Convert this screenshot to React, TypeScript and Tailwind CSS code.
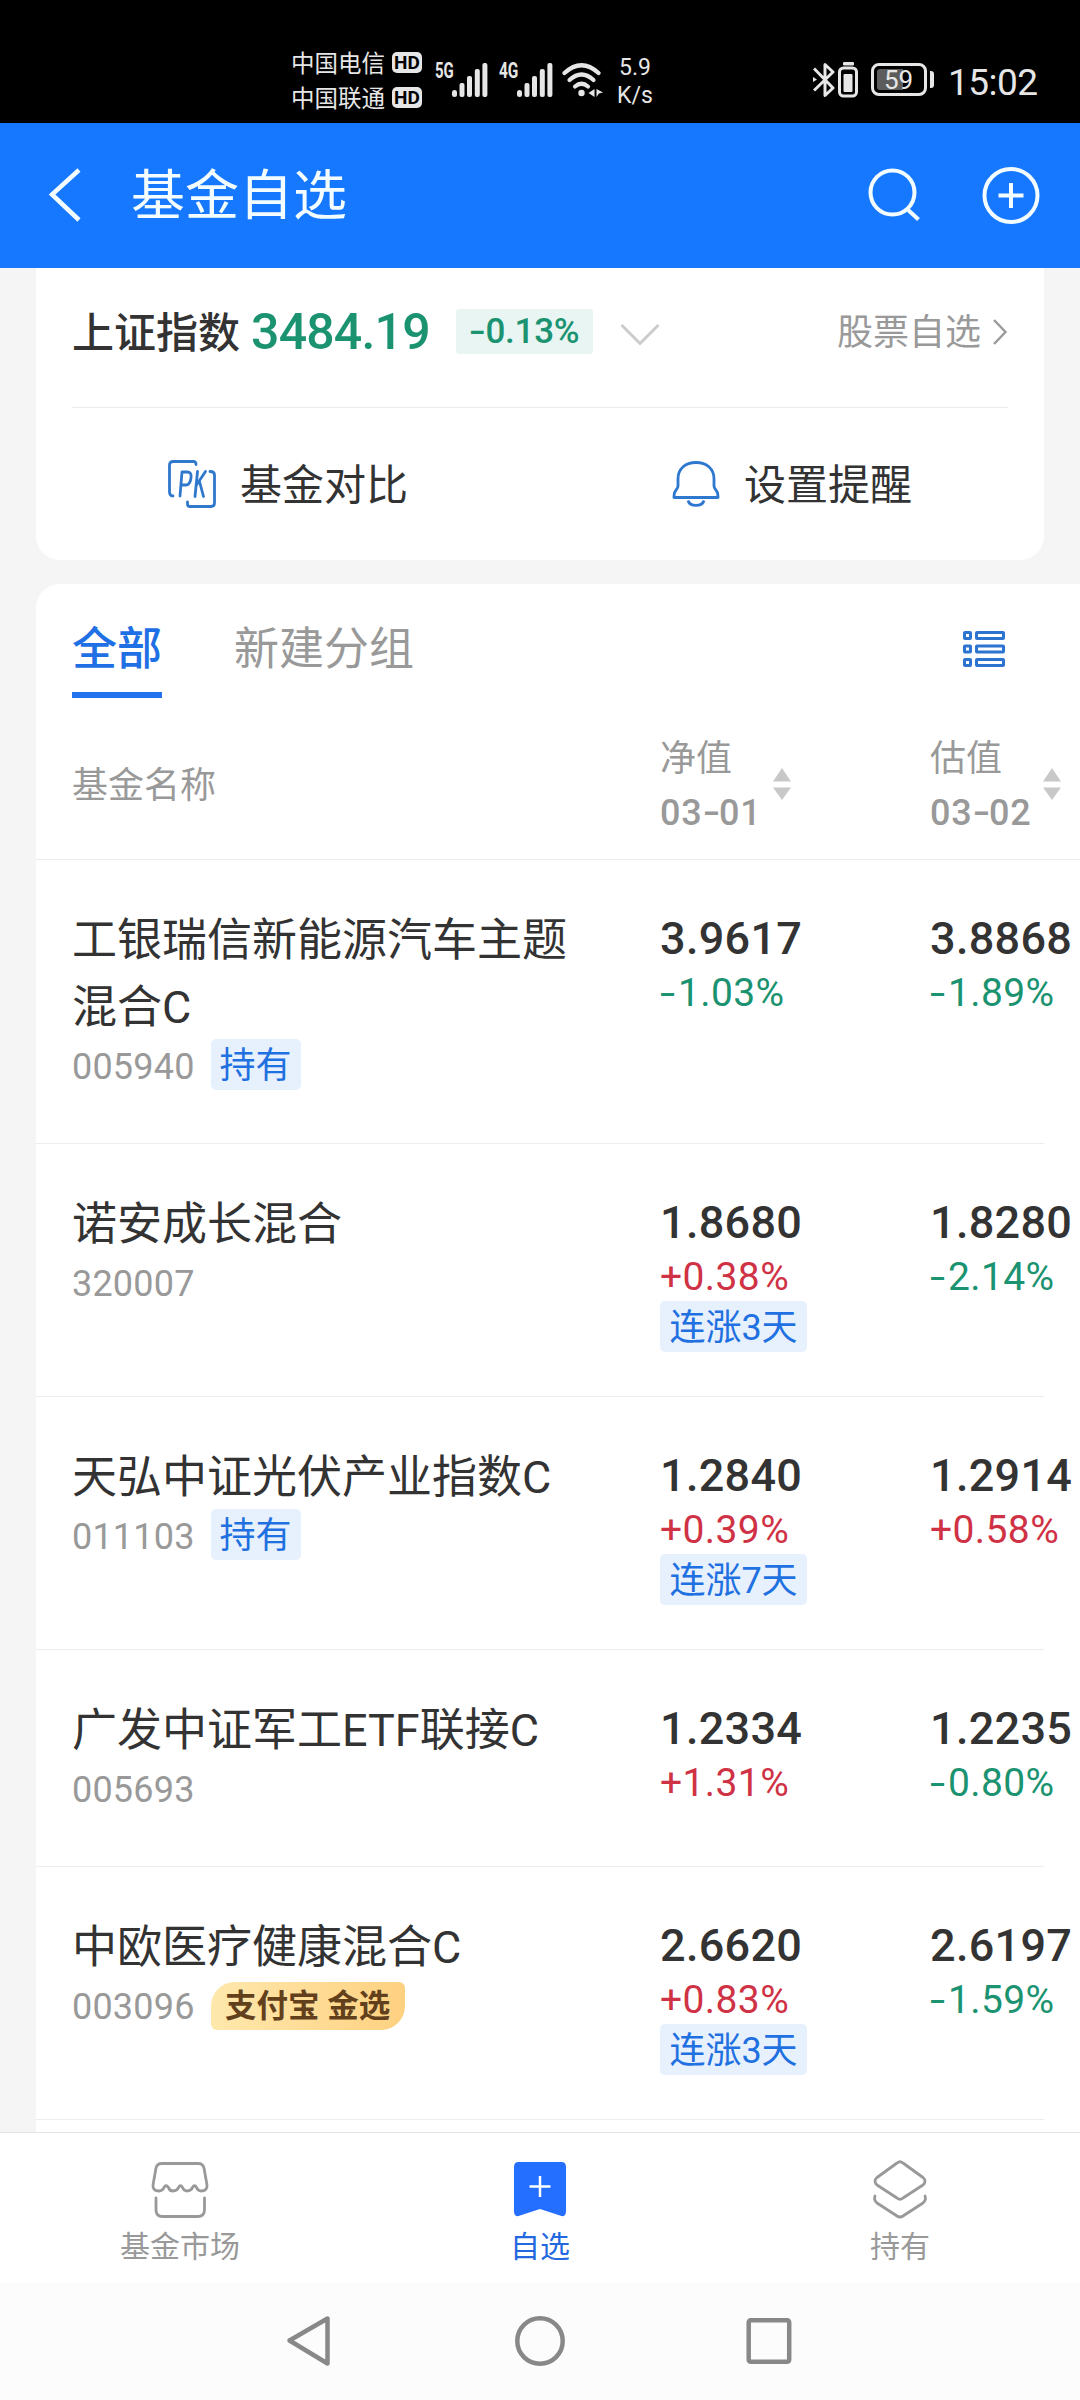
import { Fragment } from 'react';
import type { ReactNode } from 'react';
import clsx from 'clsx';

type Quote = { value: string; change: string; streak?: string };

type Fund = {
    name: string;
    code: string;
    held?: boolean;
    picked?: boolean;
    nav: Quote;
    estimate: Quote;
    height: string;
};

const funds: Fund[] = [
    {
        name: '工银瑞信新能源汽车主题混合C',
        code: '005940',
        held: true,
        nav: { value: '3.9617', change: '-1.03%' },
        estimate: { value: '3.8868', change: '-1.89%' },
        height: 'h-[284px]',
    },
    {
        name: '诺安成长混合',
        code: '320007',
        nav: { value: '1.8680', change: '+0.38%', streak: '连涨3天' },
        estimate: { value: '1.8280', change: '-2.14%' },
        height: 'h-[253px]',
    },
    {
        name: '天弘中证光伏产业指数C',
        code: '011103',
        held: true,
        nav: { value: '1.2840', change: '+0.39%', streak: '连涨7天' },
        estimate: { value: '1.2914', change: '+0.58%' },
        height: 'h-[253px]',
    },
    {
        name: '广发中证军工ETF联接C',
        code: '005693',
        nav: { value: '1.2334', change: '+1.31%' },
        estimate: { value: '1.2235', change: '-0.80%' },
        height: 'h-[217px]',
    },
    {
        name: '中欧医疗健康混合C',
        code: '003096',
        picked: true,
        nav: { value: '2.6620', change: '+0.83%', streak: '连涨3天' },
        estimate: { value: '2.6197', change: '-1.59%' },
        height: 'h-[253px]',
    },
];

// Roboto's hyphen is short, so stretch it to the width of a minus sign
function Num({ children }: { children: string }) {
    return (
        <>
            {children.split('-').map((part, i) => (
                <Fragment key={i}>
                    {i > 0 && <span className="inline-block w-[0.46em] origin-left scale-x-[1.4] tracking-normal">-</span>}
                    {part}
                </Fragment>
            ))}
        </>
    );
}

function SignalBars() {
    return (
        <svg width="36" height="34" viewBox="0 0 36 34" fill="#e6e6e6">
            <rect x="0" y="27" width="5" height="7" rx="2.5" />
            <rect x="7.5" y="20" width="5" height="14" rx="2" />
            <rect x="15" y="13" width="5" height="21" rx="2" />
            <rect x="22.8" y="6" width="5" height="28" rx="2" />
            <rect x="30.4" y="0" width="5" height="34" rx="2" />
        </svg>
    );
}

function Carrier({ name }: { name: string }) {
    return (
        <div className="flex h-[35px] items-center">
            <span className="w-[101px] pt-[3px] text-[23.5px] leading-[35px] whitespace-nowrap">{name}</span>
            <span className="flex h-[21px] w-[30px] items-center justify-center rounded-[5px] bg-[#e6e6e6] text-[19px] leading-none font-bold text-black">
                HD
            </span>
        </div>
    );
}

function StatusBar() {
    return (
        <div className="flex h-[123px] items-start bg-black pl-[291px] text-[#e6e6e6]">
            <div className="mt-[45px] w-[144px]">
                <Carrier name="中国电信" />
                <Carrier name="中国联通" />
            </div>
            <span className="mt-[62px] w-[17px] origin-left scale-x-[0.68] text-[22px] leading-[17px] font-bold">5G</span>
            <div className="mt-[63px] w-[47px]">
                <SignalBars />
            </div>
            <span className="mt-[62px] w-[18px] origin-left scale-x-[0.7] text-[22px] leading-[17px] font-bold">4G</span>
            <div className="mt-[63px] w-[45px]">
                <SignalBars />
            </div>
            <svg className="mt-[62px]" width="42" height="36" viewBox="0 0 42 36" fill="none" stroke="#e6e6e6" strokeWidth="4.2" strokeLinecap="round">
                <path d="M2.5 11 Q19.5 -4.5 36.5 11" />
                <path d="M7.5 18 Q19.5 7 31.5 18" />
                <path d="M13 24.5 Q19.5 19 26 24.5" />
                <circle cx="19.5" cy="31" r="3.2" fill="#e6e6e6" stroke="none" />
                <path d="M32.500 27V35L26.500 31ZM34.500 27L41 30.500 37 31.500 34.500 35Z" fill="#e6e6e6" stroke="none" />
            </svg>
            <div className="mt-[54px] ml-[11px] w-[40px] text-center text-[23px] leading-[28px]">
                <div>5.9</div>
                <div>K/s</div>
            </div>
            <svg className="mt-[61px] ml-[158px]" width="24" height="38" viewBox="0 0 24 38" fill="none" stroke="#e6e6e6" strokeWidth="3" strokeLinejoin="round">
                <path d="M1 7.5 L20 27 12 34.5 V3.5 L20 11 1 29.5" />
                <path d="M0 16 L4 18.5 0 21Z" fill="#e6e6e6" stroke="none" />
            </svg>
            <svg className="mt-[61px] ml-px" width="21" height="38" viewBox="0 0 21 38" fill="none">
                <rect x="5" y="1" width="11" height="3.5" rx="1" fill="#e6e6e6" />
                <rect x="1.5" y="7" width="17" height="28" rx="4" stroke="#e6e6e6" strokeWidth="3" />
                <rect x="5.5" y="13" width="9" height="18" rx="1" fill="#e6e6e6" />
            </svg>
            <div className="mt-[63px] ml-[12px] flex items-center gap-[3px]">
                <div className="flex h-[33px] w-[56px] items-center rounded-[8px] border-[3px] border-[#e6e6e6] pl-[3px]">
                    <div className="flex h-[21px] w-[26px] items-center rounded-l-[3px] bg-[#5c5c5c] pl-[7px] text-[26px] leading-none">59</div>
                </div>
                <div className="h-[17px] w-[4px] rounded-r-[3px] bg-[#e6e6e6]" />
            </div>
            <span className="mt-[62px] ml-[14px] text-[37px] leading-[42px] tracking-[-0.5px]">15:02</span>
        </div>
    );
}

function Header() {
    return (
        <header className="flex h-[145px] items-center bg-[#1677ff] pr-[39px] pl-[47px] text-[#f3fdff]">
            <svg className="-mt-px" width="36" height="56" viewBox="0 0 36 56" fill="none" stroke="currentColor" strokeWidth="4.5">
                <path d="M32 3 L5 27.5 32 53" />
            </svg>
            <h1 className="mt-[3px] ml-[48px] flex-1 text-[54px] leading-[80px] font-normal">基金自选</h1>
            <svg className="mr-[59px]" width="56" height="56" viewBox="0 0 56 56" fill="none" stroke="currentColor" strokeWidth="4">
                <circle cx="26.5" cy="24.5" r="22" />
                <path d="M41 41 L52.5 51.5" />
            </svg>
            <svg width="60" height="60" viewBox="0 0 60 60" fill="none" stroke="currentColor" strokeWidth="4">
                <circle cx="30" cy="29.5" r="26.5" />
                <path d="M17.5 29.5H42.5M30 17V42" />
            </svg>
        </header>
    );
}

function PkIcon() {
    return (
        <svg width="48" height="48" viewBox="0 0 48 48" fill="none" stroke="#2f78cc" strokeWidth="2.8" strokeLinecap="round" strokeLinejoin="round">
            <path d="M28 4.5 V4 Q28 1.500 25.500 1.500 H5 Q1.500 1.500 1.500 5 V32 Q1.500 36 5 36" />
            <path d="M42 11.5 Q46.500 11.500 46.500 15 V43 Q46.500 46.500 43 46.500 H22 Q19.500 46.500 19.500 44 V42" />
            <path d="M12 36 L14 12 H19 Q24 12 23 18 Q22 25 18 25 H13.5" />
            <path d="M29.5 11.5 L27 36.5 M37.5 11.5 L28.5 25 M31.5 21.5 L35.5 36.5" />
        </svg>
    );
}

function BellIcon() {
    return (
        <svg width="48" height="48" viewBox="0 0 48 48" fill="none" stroke="#2f78d0" strokeWidth="2.8">
            <path d="M6 19 C6 9 13 2.5 24 2.5 C35 2.5 42 9 42 19 V26 C42 30 46 29 46 36 V37.5 H2 V36 C2 29 6 30 6 26 Z" strokeLinejoin="round" />
            <path d="M16 40.5 C18 47 30 47 32 40.5" />
        </svg>
    );
}

function IndexCard() {
    return (
        <section className="mx-[36px] h-[292px] rounded-b-[24px] bg-white px-[36px]">
            <div className="flex h-[140px] items-center border-b border-[#ebebeb] pb-[12px]">
                <span className="pt-[4px] text-[42px] font-medium">上证指数</span>
                <span className="ml-[11px] pt-[2px] text-[50px] font-medium tracking-[-0.8px] text-[#1b9371]">3484.19</span>
                <span className="ml-[26px] flex h-[45px] w-[137px] items-center justify-center rounded-[3px] bg-[#e8f5f2] pt-[2px] text-[35px] font-medium tracking-[-0.3px] text-[#1b9371]">
                    <span><Num>-0.13%</Num></span>
                </span>
                <svg className="mt-[7px] ml-[27px]" width="40" height="24" viewBox="0 0 40 24" fill="none" stroke="#ccc" strokeWidth="3">
                    <path d="M1.5 2 L20 20.5 38.5 2" />
                </svg>
                <span className="ml-auto pt-[3px] text-[36px] text-[#999]">股票自选</span>
                <svg className="ml-[11px]" width="16" height="28" viewBox="0 0 16 28" fill="none" stroke="#999" strokeWidth="2.4">
                    <path d="M2 2 L13.5 14 2 26" />
                </svg>
            </div>
            <div className="-mx-[36px] grid h-[152px] grid-cols-2 pb-[1px]">
                <button className="flex items-center justify-center gap-[24px] text-[42px]">
                    <PkIcon />
                    <span className="pt-[3px]">基金对比</span>
                </button>
                <button className="flex items-center justify-center gap-[24px] text-[42px]">
                    <BellIcon />
                    <span className="pt-[3px]">设置提醒</span>
                </button>
            </div>
        </section>
    );
}

function ListIcon() {
    return (
        <svg width="42" height="36" viewBox="0 0 42 36" fill="none" stroke="#2d74d0" strokeWidth="3">
            {[1.5, 15, 28.5].map(y => (
                <g key={y}>
                    <rect x="1.5" y={y} width="6" height="6" rx="0.5" />
                    <rect x="13.5" y={y} width="27" height="6" rx="0.5" />
                </g>
            ))}
        </svg>
    );
}

function SortHead({ label, date }: { label: string; date: string }) {
    return (
        <div className="flex items-center">
            <div className="w-[113px] pt-[4px] text-[36px] font-medium">
                <div className="h-[54px] leading-[55px] font-normal">{label}</div>
                <div className="h-[55px] leading-[55px] tracking-[0.8px]"><Num>{date}</Num></div>
            </div>
            <svg width="18" height="32" viewBox="0 0 18 32" fill="#c8c8c8">
                <path d="M9 0 L18 13.5 H0Z M9 32 L18 19.5 H0Z" />
            </svg>
        </div>
    );
}

function Tag({ children, className }: { children: ReactNode; className?: string }) {
    return (
        <span className={clsx('flex h-[51px] items-center justify-center rounded-[5px] bg-[#e7f1fd] pt-[2px] text-[36px] leading-none whitespace-nowrap text-[#1f70e0]', className)}>
            {children}
        </span>
    );
}

function QuoteCell({ quote }: { quote: Quote }) {
    const isUp = quote.change.startsWith('+');

    return (
        <div>
            <div className="h-[67px] text-[45px] leading-[68px] font-medium tracking-[0.3px]">{quote.value}</div>
            <div className={clsx('h-[45px] text-[39px] leading-[42px] tracking-[0.4px]', isUp ? 'text-[#d03245]' : 'text-[#1b9371]')}>
                <Num>{quote.change}</Num>
            </div>
            {quote.streak && <Tag className="w-[147px]">{quote.streak}</Tag>}
        </div>
    );
}

function FundRow({ fund }: { fund: Fund }) {
    return (
        <div className={clsx('mr-[36px] grid grid-cols-[588px_270px_150px] border-b border-[#ededed] pt-[45px] pl-[36px]', fund.height)}>
            <div>
                <div className="-mb-[2px] w-[500px] pt-[2px] text-[45px] leading-[67px]">{fund.name}</div>
                <div className="flex h-[51px] items-center">
                    <span className="pt-[4px] text-[36px] tracking-[0.2px] text-[#999]">{fund.code}</span>
                    {fund.held && <Tag className="ml-[16px] w-[90px]">持有</Tag>}
                    {fund.picked && (
                        <span className="mt-[2px] ml-[16px] flex h-[48px] w-[194px] items-center justify-center rounded-tl-[24px] rounded-tr-[6px] rounded-br-[24px] rounded-bl-[6px] bg-linear-to-r from-[#fee8ac] to-[#fed180] pt-[3px] text-[31.5px] leading-none font-bold whitespace-nowrap text-[#63401c]">
                            支付宝 金选
                        </span>
                    )}
                </div>
            </div>
            <QuoteCell quote={fund.nav} />
            <QuoteCell quote={fund.estimate} />
        </div>
    );
}

function FundList() {
    return (
        <section className="mt-[24px] ml-[36px] h-[1548px] overflow-hidden rounded-tl-[24px] bg-white">
            <div className="flex h-[114px] items-start pr-[75px] pl-[36px] text-[45px]">
                <div className="h-[114px] w-[90px] border-b-[6px] border-[#2472ee] leading-[132px] font-medium text-[#1f70e4]">全部</div>
                <div className="ml-[72px] leading-[132px] text-[#999]">新建分组</div>
                <div className="mt-[47px] ml-auto">
                    <ListIcon />
                </div>
            </div>
            <div className="grid h-[162px] grid-cols-[588px_270px_1fr] items-center border-b border-[#ebebeb] pt-[11px] pl-[36px] text-[#999]">
                <div className="pt-[4px] text-[36px]">基金名称</div>
                <SortHead label="净值" date="03-01" />
                <SortHead label="估值" date="03-02" />
            </div>
            {funds.map(fund => (
                <FundRow key={fund.code} fund={fund} />
            ))}
        </section>
    );
}

function MarketIcon() {
    return (
        <svg width="60" height="60" viewBox="0 0 60 60" fill="none" stroke="#999" strokeWidth="2.8" strokeLinecap="round" strokeLinejoin="round">
            <path d="M12 3.5 H48 Q53 3.5 54 8 L57 25 Q57.5 31 51 31 Q48 31 46.5 27.5 Q44.5 24 42.5 27.5 Q41 31 37 31 Q34 31 32.5 27.5 Q30.5 24 28.5 27.5 Q27 31 23 31 Q19.5 31 18.5 27.5 Q16 24 14 27.5 Q12.5 31 9 31 Q2.5 31 3 25 L6 8 Q7 3.5 12 3.5Z" />
            <path d="M6 38 V50 Q6 56.5 12.5 56.5 H47.5 Q54.5 56.5 54.5 50 V38" />
        </svg>
    );
}

function BookmarkIcon() {
    return (
        <svg width="60" height="60" viewBox="0 0 60 60">
            <path d="M8.5 2 H51.5 Q56 2 56 7 V51 Q56 58 50 55.5 L30 49 10 55.5 Q4 58 4 51 V7 Q4 2 8.5 2Z" fill="#246fff" />
            <path d="M19.5 26.5H40.5M30 16V37" stroke="#fff" strokeWidth="2.5" />
        </svg>
    );
}

function LayersIcon() {
    return (
        <svg width="60" height="60" viewBox="0 0 60 60" fill="none" stroke="#999" strokeWidth="2.8" strokeLinecap="round" strokeLinejoin="round">
            <path d="M27 3 Q30 0.5 33 3 L53 17.5 Q57 21 53 25 L33 38 Q30 40.5 27 38 L7 25 Q3 21 7 17.5Z" />
            <path d="M5 36 Q3.5 40 7 43 L27 56 Q30 58 33 56 L53 43 Q56.5 40 55 36" />
        </svg>
    );
}

const tabs = [
    { label: '基金市场', icon: <MarketIcon /> },
    { label: '自选', icon: <BookmarkIcon />, active: true },
    { label: '持有', icon: <LayersIcon /> },
];

function TabBar() {
    return (
        <nav className="grid h-[151px] grid-cols-3 border-t border-[#e2e2e2] bg-white">
            {tabs.map(tab => (
                <div key={tab.label} className={clsx('flex flex-col items-center pt-[27px] text-[30px]', tab.active ? 'text-[#2468e0]' : 'text-[#999]')}>
                    {tab.icon}
                    <div className="mt-[4px] leading-[46px]">{tab.label}</div>
                </div>
            ))}
        </nav>
    );
}

function SystemNav() {
    return (
        <div className="flex h-[117px] items-start bg-[#fcfcfc] pt-[30px] pl-[282px]">
            <svg width="54" height="56" viewBox="0 0 54 56" fill="none" stroke="#888" strokeWidth="4.5" strokeLinejoin="round">
                <path d="M7.5 27.5 L45.5 5.5 V50.5Z" />
            </svg>
            <svg className="ml-[176px]" width="56" height="56" viewBox="0 0 56 56" fill="none" stroke="#888" strokeWidth="4.5">
                <circle cx="28" cy="28" r="22.7" />
            </svg>
            <svg className="ml-[173px]" width="56" height="56" viewBox="0 0 56 56" fill="none" stroke="#888" strokeWidth="4.5">
                <rect x="7.7" y="7.2" width="40.5" height="41.5" rx="2" />
            </svg>
        </div>
    );
}

export default function App() {
    return (
        <div className="flex h-[2400px] w-[1080px] flex-col overflow-hidden bg-[#f5f5f5] font-[Roboto,'Noto_Sans_CJK_SC',sans-serif] text-[#333]">
            <StatusBar />
            <Header />
            <IndexCard />
            <FundList />
            <TabBar />
            <SystemNav />
        </div>
    );
}
